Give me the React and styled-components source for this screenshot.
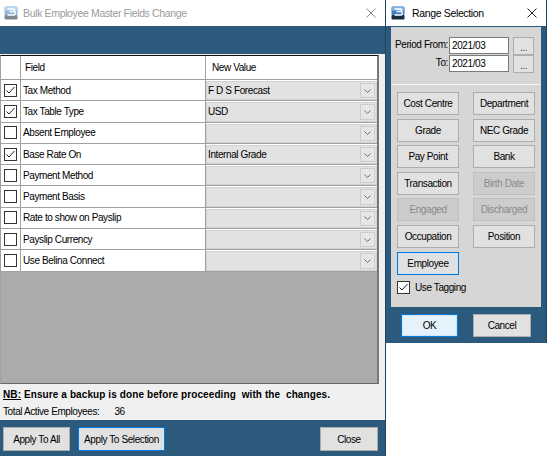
import React from "react";
import styled, { createGlobalStyle } from "styled-components";

const BLUE = "#2b5a7c";
const FONT = `"Liberation Sans", Arial, sans-serif`;

const GlobalStyle = createGlobalStyle`
  html, body { margin: 0; padding: 0; background: #fff; }
  body { font-family: ${FONT}; font-size: 10px; letter-spacing: -0.4px; color: #000; }
  * { box-sizing: border-box; }
`;

const Desktop = styled.div`
  display: flex;
  align-items: flex-start;
  width: 549px;
  height: 456px;
  overflow: hidden;
`;

const Window = styled.div`
  display: flex;
  flex-direction: column;
  flex-shrink: 0;
  width: ${(p) => p.$w}px;
  height: ${(p) => p.$h}px;
  background: #f0f0f0;
  border-right: 1px solid #1f4460;
`;

const TitleBar = styled.div`
  height: 26px;
  flex-shrink: 0;
  background: #fff;
  display: flex;
  align-items: center;
  gap: ${(p) => p.$gap}px;
  padding: 0 9px 0 ${(p) => p.$pl}px;
  font-size: 10.5px;
  letter-spacing: -0.35px;
  color: ${(p) => (p.$active ? "#000" : "#9a9a9a")};
`;

const TitleText = styled.span`
  flex: 1;
  white-space: nowrap;
`;

const IconSvg = styled.svg`
  flex-shrink: 0;
  opacity: ${(p) => (p.$faded ? 0.55 : 1)};
`;

const AppIcon = ({ faded }) => (
  <IconSvg $faded={faded} width="14" height="14" viewBox="0 0 14 14">
    <rect x="0.5" y="0.5" width="13" height="9" rx="1.5" fill="#3f7cc0" />
    <rect x="0.5" y="0.5" width="13" height="4" rx="1.5" fill="#7eb2e6" />
    <rect x="0.5" y="9" width="13" height="4.5" rx="1" fill="#1b2a3f" />
    <path d="M3.5 3h6.5c1 0 1 2.5 0 2.5H5.5M5.5 5.5h5c1 0 1 3.5 0 3.5H3.5" fill="none" stroke="#fff" strokeWidth="1.4" />
  </IconSvg>
);

const CloseX = ({ color }) => (
  <svg width="10" height="10" viewBox="0 0 10 10">
    <path d="M0.5 0.5L9.5 9.5M9.5 0.5L0.5 9.5" stroke={color} strokeWidth="1" />
  </svg>
);

/* ---------- left window ---------- */

const Band = styled.div`
  height: 28px;
  flex-shrink: 0;
  background: ${BLUE};
`;

const GridArea = styled.div`
  height: 330px;
  flex-shrink: 0;
  padding: 1px 6px 0 0;
`;

const DataGrid = styled.div`
  height: 329px;
  background: #ababab;
  border-top: 1px solid #111;
  border-left: 1px solid #a0a0a0;
  border-right: 2px solid #787878;
  border-bottom: 1px solid #696969;
`;

const GridRow = styled.div`
  display: grid;
  grid-template-columns: 20px 185px 1fr;
  height: ${(p) => (p.$header ? "24px" : "21.3px")};
  background: #fff;
  border-bottom: 1px solid #a0a0a0;
`;

const Cell = styled.div`
  display: flex;
  align-items: center;
  justify-content: ${(p) => (p.$center ? "center" : "flex-start")};
  padding: ${(p) => p.$pad || "0"};
  border-right: ${(p) => (p.$last ? "none" : "1px solid #a0a0a0")};
  white-space: nowrap;
  overflow: hidden;
`;

const Box = styled.span`
  width: 13px;
  height: 13px;
  flex-shrink: 0;
  border: 1px solid #333;
  background: #fff;
  display: flex;
  align-items: center;
  justify-content: center;
`;

const CheckBox = ({ checked }) => (
  <Box>
    {checked && (
      <svg width="11" height="11" viewBox="0 0 11 11">
        <path d="M1.5 5.5L4 8L9.5 2" fill="none" stroke="#222" strokeWidth="1" />
      </svg>
    )}
  </Box>
);

const Combo = styled.div`
  flex: 1;
  align-self: stretch;
  display: flex;
  align-items: center;
  background: #e2e2e2;
  border: 1px solid #d2d2d2;
  padding-left: 1px;
`;

const ComboText = styled.span`
  flex: 1;
`;

const ArrowBox = styled.span`
  width: 15px;
  align-self: stretch;
  margin: 1px 1px 1px 0;
  border: 1px solid #cdcdcd;
  background: #e6e6e6;
  display: flex;
  align-items: center;
  justify-content: center;
`;

const Chevron = () => (
  <svg width="7" height="4" viewBox="0 0 7 4">
    <path d="M0.5 0.5L3.5 3.5L6.5 0.5" fill="none" stroke="#707070" strokeWidth="1" />
  </svg>
);

const Info = styled.div`
  height: 36px;
  flex-shrink: 0;
  padding: 3px 3px 0;
  display: flex;
  flex-direction: column;
`;

const Note = styled.div`
  font-weight: bold;
  letter-spacing: 0.1px;
  line-height: 16px;
  white-space: pre;
  u { text-decoration: underline; }
`;

const Total = styled.div`
  line-height: 17px;
  white-space: pre;
`;

const Count = styled.span`
  margin-left: 15px;
`;

const Footer = styled.div`
  height: ${(p) => p.$h}px;
  flex-shrink: 0;
  background: ${BLUE};
  display: flex;
  align-items: flex-start;
  gap: ${(p) => p.$gap}px;
  padding: 7px 7px 0 ${(p) => p.$pl}px;
`;

const Button = styled.button`
  width: ${(p) => p.$w}px;
  height: ${(p) => p.$h || 23}px;
  margin-left: ${(p) => (p.$push ? "auto" : "0")};
  padding: 0;
  font-family: ${FONT};
  font-size: 10px;
  letter-spacing: -0.4px;
  white-space: nowrap;
  color: ${(p) => (p.$disabled ? "#8a8a8a" : "#000")};
  background: ${(p) => (p.$default ? "#e5f1fb" : p.$disabled ? "#cccccc" : "#e1e1e1")};
  border: 1px solid ${(p) => (p.$focus ? "#0078d7" : p.$disabled ? "#bfbfbf" : "#adadad")};
  box-shadow: ${(p) => (p.$focus ? "inset 0 0 0 1px #cfe4f7" : "none")};
  cursor: default;
`;

/* ---------- right window ---------- */

const RangeBody = styled.div`
  flex: 1;
  display: flex;
  flex-direction: column;
  background: ${BLUE};
  padding: 1px 5px 0;
`;

const PeriodPanel = styled.div`
  height: 57px;
  flex-shrink: 0;
  background: #d6d6d6;
  padding-top: 10px;
  display: flex;
  flex-direction: column;
`;

const PeriodRow = styled.div`
  height: 18px;
  display: flex;
  align-items: flex-start;
`;

const PeriodLabel = styled.span`
  width: 58px;
  padding-right: 1px;
  text-align: right;
  line-height: 16px;
  white-space: nowrap;
`;

const DateInput = styled.div`
  width: 60px;
  height: 17px;
  border: 1px solid #7a7a7a;
  background: #fff;
  padding-left: 2px;
  line-height: 15px;
`;

const DotsButton = styled(Button)`
  margin-left: 4px;
  line-height: 10px;
  padding-top: 4px;
  color: #444;
`;

const ButtonsPanel = styled.div`
  flex: 1;
  background: #d6d6d6;
  border-top: 1px solid #f2f2f2;
  padding: 7px 0 0 6px;
`;

const ButtonGrid = styled.div`
  display: grid;
  grid-template-columns: 62px 62px;
  grid-auto-rows: 23px;
  column-gap: 14px;
  row-gap: 3.6px;
`;

const TagRow = styled.label`
  display: flex;
  align-items: center;
  gap: 5px;
  margin-top: 6px;
`;

const fields = [
  { name: "Tax Method", checked: true, value: "F D S Forecast" },
  { name: "Tax Table Type", checked: true, value: "USD" },
  { name: "Absent Employee", checked: false, value: "" },
  { name: "Base Rate On", checked: true, value: "Internal Grade" },
  { name: "Payment Method", checked: false, value: "" },
  { name: "Payment Basis", checked: false, value: "" },
  { name: "Rate to show on Payslip", checked: false, value: "" },
  { name: "Payslip Currency", checked: false, value: "" },
  { name: "Use Belina Connect", checked: false, value: "" },
];

const ranges = [
  { label: "Cost Centre" },
  { label: "Department" },
  { label: "Grade" },
  { label: "NEC Grade" },
  { label: "Pay Point" },
  { label: "Bank" },
  { label: "Transaction" },
  { label: "Birth Date", disabled: true },
  { label: "Engaged", disabled: true },
  { label: "Discharged", disabled: true },
  { label: "Occupation" },
  { label: "Position" },
  { label: "Employee", focus: true },
];

export default function App() {
  return (
    <Desktop>
      <GlobalStyle />
      <Window $w={386} $h={456}>
        <TitleBar $pl={4} $gap={5}>
          <AppIcon faded />
          <TitleText>Bulk Employee Master Fields Change</TitleText>
          <CloseX color="#8a8a8a" />
        </TitleBar>
        <Band />
        <GridArea>
          <DataGrid>
            <GridRow $header>
              <Cell />
              <Cell $pad="0 0 0 4px">Field</Cell>
              <Cell $last $pad="0 0 0 6px">New Value</Cell>
            </GridRow>
            {fields.map((f) => (
              <GridRow key={f.name}>
                <Cell $center>
                  <CheckBox checked={f.checked} />
                </Cell>
                <Cell $pad="0 0 0 2px">{f.name}</Cell>
                <Cell $last $pad="1px 0 0 0">
                  <Combo>
                    <ComboText>{f.value}</ComboText>
                    <ArrowBox>
                      <Chevron />
                    </ArrowBox>
                  </Combo>
                </Cell>
              </GridRow>
            ))}
          </DataGrid>
        </GridArea>
        <Info>
          <Note>
            <u>NB:</u> Ensure a backup is done before proceeding  with the  changes.
          </Note>
          <Total>
            Total Active Employees:<Count>36</Count>
          </Total>
        </Info>
        <Footer $h={36} $pl={3} $gap={8}>
          <Button $w={67} $h={24}>Apply To All</Button>
          <Button $w={87} $h={24} $focus>Apply To Selection</Button>
          <Button $w={58} $h={24} $push>Close</Button>
        </Footer>
      </Window>

      <Window $w={161} $h={343}>
        <TitleBar $active $pl={5} $gap={7}>
          <AppIcon />
          <TitleText>Range Selection</TitleText>
          <CloseX color="#222" />
        </TitleBar>
        <RangeBody>
          <PeriodPanel>
            <PeriodRow>
              <PeriodLabel>Period From:</PeriodLabel>
              <DateInput>2021/03</DateInput>
              <DotsButton $w={21} $h={18}>...</DotsButton>
            </PeriodRow>
            <PeriodRow>
              <PeriodLabel>To:</PeriodLabel>
              <DateInput>2021/03</DateInput>
              <DotsButton $w={21} $h={18}>...</DotsButton>
            </PeriodRow>
          </PeriodPanel>
          <ButtonsPanel>
            <ButtonGrid>
              {ranges.map((r) => (
                <Button key={r.label} $w={62} $disabled={r.disabled} $focus={r.focus}>
                  {r.label}
                </Button>
              ))}
            </ButtonGrid>
            <TagRow>
              <CheckBox checked />
              Use Tagging
            </TagRow>
          </ButtonsPanel>
          <Footer $h={36} $pl={10} $gap={15}>
            <Button $w={57} $default $focus>OK</Button>
            <Button $w={58}>Cancel</Button>
          </Footer>
        </RangeBody>
      </Window>
    </Desktop>
  );
}
